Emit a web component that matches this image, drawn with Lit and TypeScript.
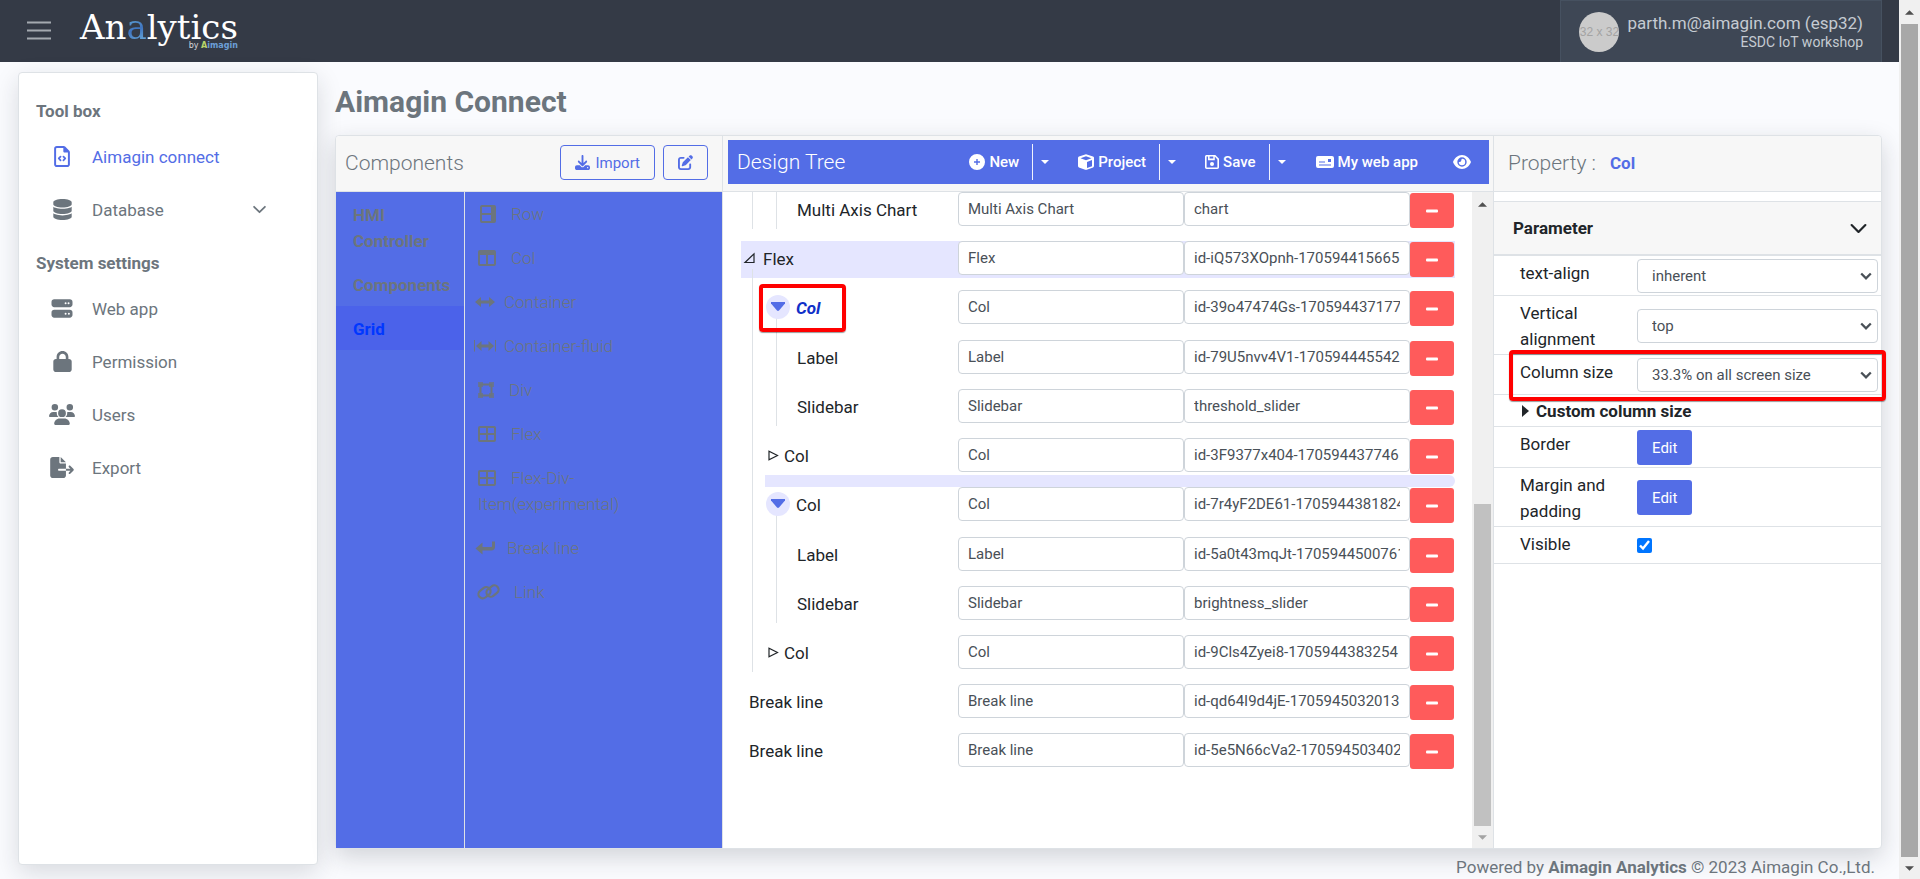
import { LitElement, html, css, svg, nothing, TemplateResult, SVGTemplateResult } from "lit";
import { customElement, property } from "lit/decorators.js";
import { classMap } from "lit/directives/class-map.js";

interface Icon {
  box: string;
  art: SVGTemplateResult;
}

const ICONS: Record<string, Icon> = {
  menu: {
    box: "0 0 24 20",
    art: svg`<path d="M0 1.5h24M0 9.5h24M0 17.5h24" fill="none" stroke="currentColor" stroke-width="2"/>`,
  },
  fileCode: {
    box: "0 0 384 512",
    art: svg`<path fill-rule="evenodd" d="M64 0h170c12 0 25 5 34 14l102 102c9 9 14 22 14 34v298c0 35-29 64-64 64H64c-35 0-64-29-64-64V64C0 29 29 0 64 0zm0 48c-9 0-16 7-16 16v384c0 9 7 16 16 16h256c9 0 16-7 16-16V160h-80c-18 0-32-14-32-32V48z"/><path d="M157 258l-44 46 44 46M227 258l44 46-44 46" fill="none" stroke="currentColor" stroke-width="42" stroke-linecap="round" stroke-linejoin="round"/>`,
  },
  database: {
    box: "0 0 448 512",
    art: svg`<path d="M448 80v48c0 44.2-100.3 80-224 80S0 172.2 0 128V80C0 35.8 100.3 0 224 0S448 35.8 448 80zM393.2 214.7c20.8-7.4 39.9-16.9 54.8-28.6V288c0 44.2-100.3 80-224 80S0 332.2 0 288V186.1c14.9 11.8 34 21.2 54.8 28.6C99.7 230.7 159.5 240 224 240s124.3-9.3 169.2-25.3zM0 346.1c14.9 11.8 34 21.2 54.8 28.6C99.7 390.7 159.5 400 224 400s124.3-9.3 169.2-25.3c20.8-7.4 39.9-16.9 54.8-28.6V432c0 44.2-100.3 80-224 80S0 476.2 0 432V346.1z"/>`,
  },
  server: {
    box: "0 0 512 512",
    art: svg`<path d="M64 32C28.7 32 0 60.7 0 96v64c0 35.3 28.7 64 64 64H448c35.3 0 64-28.7 64-64V96c0-35.3-28.7-64-64-64H64zm280 72a24 24 0 1 1 0 48 24 24 0 1 1 0-48zm48 24a24 24 0 1 1 48 0 24 24 0 1 1 -48 0zM64 288c-35.3 0-64 28.7-64 64v64c0 35.3 28.7 64 64 64H448c35.3 0 64-28.7 64-64V352c0-35.3-28.7-64-64-64H64zm280 72a24 24 0 1 1 0 48 24 24 0 1 1 0-48zm56 24a24 24 0 1 1 48 0 24 24 0 1 1 -48 0z"/>`,
  },
  lock: {
    box: "0 0 448 512",
    art: svg`<path d="M144 144v48H304V144c0-44.2-35.8-80-80-80s-80 35.8-80 80zM80 192V144C80 64.5 144.5 0 224 0s144 64.5 144 144v48h16c35.3 0 64 28.7 64 64V448c0 35.3-28.7 64-64 64H64c-35.3 0-64-28.7-64-64V256c0-35.3 28.7-64 64-64H80z"/>`,
  },
  users: {
    box: "0 0 640 512",
    art: svg`<path d="M144 0a80 80 0 1 1 0 160A80 80 0 1 1 144 0zM512 0a80 80 0 1 1 0 160A80 80 0 1 1 512 0zM0 298.7C0 239.8 47.8 192 106.7 192h42.7c15.9 0 31 3.5 44.6 9.7c-1.3 7.2-1.9 14.7-1.9 22.3c0 38.2 16.8 72.5 43.3 96c-.2 0-.4 0-.7 0H21.3C9.6 320 0 310.4 0 298.7zM405.3 320c-.2 0-.4 0-.7 0c26.6-23.5 43.3-57.8 43.3-96c0-7.6-.7-15-1.9-22.3c13.6-6.3 28.7-9.7 44.6-9.7h42.7C592.2 192 640 239.8 640 298.7c0 11.8-9.6 21.3-21.3 21.3H405.3zM224 224a96 96 0 1 1 192 0 96 96 0 1 1 -192 0zM128 485.3C128 411.7 187.7 352 261.3 352H378.7C452.3 352 512 411.7 512 485.3c0 14.7-11.9 26.7-26.7 26.7H154.7c-14.7 0-26.7-11.9-26.7-26.7z"/>`,
  },
  fileExport: {
    box: "0 0 576 512",
    art: svg`<path d="M0 64C0 28.7 28.7 0 64 0H224V128c0 17.7 14.3 32 32 32H384V288H216c-13.3 0-24 10.7-24 24s10.7 24 24 24H384V448c0 35.3-28.7 64-64 64H64c-35.3 0-64-28.7-64-64V64zM384 336V288H494.1l-39-39c-9.4-9.4-9.4-24.6 0-33.9s24.6-9.4 33.9 0l80 80c9.4 9.4 9.4 24.6 0 33.9l-80 80c-9.4 9.4-24.6 9.4-33.9 0s-9.4-24.6 0-33.9l39-39H384zm0-208H256V0L384 128z"/>`,
  },
  chevron: {
    box: "0 0 12 8",
    art: svg`<path d="M1 1.5l5 5 5-5" fill="none" stroke="currentColor" stroke-width="1.6" stroke-linecap="round" stroke-linejoin="round"/>`,
  },
  chevronBold: {
    box: "0 0 12 8",
    art: svg`<path d="M1.2 1.5L6 6.3l4.800-4.800" fill="none" stroke="currentColor" stroke-width="2.300"/>`,
  },
  download: {
    box: "0 0 512 512",
    art: svg`<path d="M288 32c0-17.7-14.3-32-32-32s-32 14.3-32 32V274.7l-73.4-73.4c-12.5-12.5-32.8-12.5-45.3 0s-12.5 32.8 0 45.3l128 128c12.5 12.5 32.8 12.5 45.3 0l128-128c12.5-12.5 12.5-32.8 0-45.3s-32.8-12.5-45.3 0L288 274.7V32zM64 352c-35.3 0-64 28.7-64 64v32c0 35.3 28.7 64 64 64H448c35.3 0 64-28.7 64-64V416c0-35.3-28.7-64-64-64H346.5l-45.3 45.3c-25 25-65.5 25-90.5 0L165.5 352H64zm368 56a24 24 0 1 1 0 48 24 24 0 1 1 0-48z"/>`,
  },
  edit: {
    box: "0 0 512 512",
    art: svg`<path d="M471.6 21.7c-21.9-21.9-57.3-21.9-79.2 0L362.3 51.7l97.9 97.9 30.1-30.1c21.9-21.9 21.9-57.3 0-79.2L471.6 21.7zm-299.2 220c-6.1 6.1-10.8 13.6-13.5 21.9l-29.6 88.8c-2.9 8.6-.6 18.1 5.8 24.6s15.9 8.7 24.6 5.8l88.8-29.6c8.2-2.7 15.7-7.4 21.9-13.5L437.7 172.3 339.7 74.3 172.4 241.7zM96 64C43 64 0 107 0 160V416c0 53 43 96 96 96H352c53 0 96-43 96-96V320c0-17.7-14.3-32-32-32s-32 14.3-32 32v96c0 17.7-14.3 32-32 32H96c-17.7 0-32-14.3-32-32V160c0-17.7 14.3-32 32-32h96c17.7 0 32-14.3 32-32s-14.3-32-32-32H96z"/>`,
  },
  row: {
    box: "0 0 18 18",
    art: svg`<path fill-rule="evenodd" d="M4 0h12a2 2 0 0 1 2 2v14a2 2 0 0 1-2 2H4a2 2 0 0 1-2-2V2a2 2 0 0 1 2-2zm0 2v6h9V2zm0 8v6h9v-6z"/>`,
  },
  col: {
    box: "0 0 18 18",
    art: svg`<path fill-rule="evenodd" d="M2 1h14a2 2 0 0 1 2 2v12a2 2 0 0 1-2 2H2a2 2 0 0 1-2-2V3a2 2 0 0 1 2-2zm0 5v9h6V6zm8 0v9h6V6z"/>`,
  },
  arrows: {
    box: "0 0 20 18",
    art: svg`<path d="M0 9l6-5v3.500h8V4l6 5-6 5v-3.500H6V14z"/>`,
  },
  arrowsBar: {
    box: "0 0 20 18",
    art: svg`<path d="M1 9l5.500-5v3.500h7V4l5.500 5-5.500 5v-3.500h-7V14z"/><path d="M-.5 3v11.500M20.500 3v11.500" stroke="currentColor" stroke-width="1"/>`,
  },
  frame: {
    box: "0 0 16 18",
    art: svg`<path d="M2.500 3.500h11v11h-11z" fill="none" stroke="currentColor" stroke-width="2"/><path d="M0 1h5v5H0zM11 1h5v5h-5zM0 12h5v5H0zM11 12h5v5h-5z" fill-opacity=".75"/>`,
  },
  table: {
    box: "0 0 18 18",
    art: svg`<path fill-rule="evenodd" d="M2 1h14a2 2 0 0 1 2 2v12a2 2 0 0 1-2 2H2a2 2 0 0 1-2-2V3a2 2 0 0 1 2-2zm0 2v5h6V3zm8 0v5h6V3zM2 10v5h6v-5zm8 0v5h6v-5z"/>`,
  },
  enter: {
    box: "0 0 14 18",
    art: svg`<path d="M-2.500 9.500l7-6v4.500h8.500c.7 0 1-.4 1-1V2.500h3V8c0 2-1.500 3.500-3.500 3.500H4.500V15.500z"/>`,
  },
  link: {
    box: "0 0 21 18",
    art: svg`<g fill="none" stroke="currentColor" stroke-width="2.200"><rect x="0" y="5.500" width="13" height="8.500" rx="4.200" transform="rotate(-38 6.500 9.700)"/><rect x="8" y="3.800" width="13" height="8.500" rx="4.200" transform="rotate(-38 14.500 8)"/></g>`,
  },
  plusCircle: {
    box: "0 0 16 16",
    art: svg`<path fill-rule="evenodd" d="M8 0a8 8 0 1 1 0 16A8 8 0 0 1 8 0zM7.300 5v2.300H5v1.400h2.300V11h1.400V8.700H11V7.300H8.700V5z"/>`,
  },
  cube: {
    box: "0 0 16 16",
    art: svg`<path fill-rule="evenodd" d="M7.200.4L1 2.500c-.6.2-1 .8-1 1.400v8c0 .6.300 1.200.9 1.500l6.300 2.400c.5.200 1.100.2 1.600 0l6.300-2.400c.6-.3.900-.9.900-1.500v-8c0-.6-.4-1.200-1-1.400L8.800.4a2.500 2.500 0 0 0-1.600 0zM8 2.200l5.500 2L8 6.200l-5.500-2zM9 8l5-1.900v6.100L9 14z"/>`,
  },
  save: {
    box: "0 0 14 14",
    art: svg`<path fill-rule="evenodd" d="M1.700 0h8.600l3.700 3.700v8.600c0 1-.7 1.700-1.700 1.700H1.700C.7 14 0 13.300 0 12.300V1.700C0 .7.700 0 1.700 0zm-.1 1.600v10.800h10.800V4.400L9.800 1.600v3.600H3V1.600zm3 0v2h3.700v-2z"/><circle cx="7" cy="9" r="2"/>`,
  },
  card: {
    box: "0 0 18 14",
    art: svg`<path fill-rule="evenodd" d="M2 1h14a2 2 0 0 1 2 2v8a2 2 0 0 1-2 2H2a2 2 0 0 1-2-2V3a2 2 0 0 1 2-2zm1 5.500v1h6v-1zm0 3v1h12v-1zM12 4v3h3V4z"/>`,
  },
  eye: {
    box: "0 0 18 14",
    art: svg`<path fill-rule="evenodd" d="M9 0c4.200 0 7.400 3 9 7-1.600 4-4.800 7-9 7S1.600 11 0 7c1.600-4 4.800-7 9-7zm0 2.300a4.700 4.700 0 1 0 0 9.400 4.700 4.700 0 0 0 0-9.400zm0 1.500a3.200 3.200 0 1 1-3.200 3.200c1.600.4 2.700-.7 2.500-2.200z"/>`,
  },
  caret: { box: "0 0 8 4", art: svg`<path d="M0 0h8L4 4z"/>` },
  minus: { box: "0 0 12 4", art: svg`<rect width="12" height="3" y="0.500" rx="1"/>` },
  triOpen: {
    box: "0 0 11 11",
    art: svg`<path d="M1 9.500h9V.8z" fill="none" stroke="currentColor" stroke-width="1.200"/>`,
  },
  triClosed: {
    box: "0 0 11 11",
    art: svg`<path d="M1 1.200v8.600l8.500-4.300z" fill="none" stroke="currentColor" stroke-width="1.200"/>`,
  },
  triDown: {
    box: "0 0 14 9",
    art: svg`<path d="M0 0h14v1.500L8 8.500q-1 .8-2 0L0 1.500z"/>`,
  },
  triSolid: { box: "0 0 7 12", art: svg`<path d="M0 0l7 6-7 6z"/>` },
  up: { box: "0 0 10 5", art: svg`<path d="M0 5h10L5 0z"/>` },
  down: { box: "0 0 10 5", art: svg`<path d="M0 0h10L5 5z"/>` },
};

const icon = (name: string, width: number, height: number) => svg`<svg
  class="icon" width=${width} height=${height} viewBox=${ICONS[name].box}
  fill="currentColor" aria-hidden="true">${ICONS[name].art}</svg>`;

const base = css`
  * {
    box-sizing: border-box;
  }
  .icon {
    flex: none;
    display: block;
    overflow: visible;
  }
  button,
  input,
  select {
    font: inherit;
    color: inherit;
    margin: 0;
  }
  ul {
    list-style: none;
    margin: 0;
    padding: 0;
  }
`;

@customElement("scroll-rail")
class ScrollRail extends LitElement {
  @property({ type: Number }) before = 0;
  @property({ type: Number }) size = 1;
  @property({ type: Number }) after = 0;

  static styles = [
    base,
    css`
      :host {
        display: flex;
        flex-direction: column;
        width: 21px;
        flex: none;
        background: #f0f0f0;
        color: #505050;
      }
      .end {
        display: flex;
        align-items: center;
        justify-content: center;
        height: 24px;
        flex: none;
      }
      .end.low {
        color: var(--rail-low, #505050);
        height: 22px;
      }
      .track {
        display: flex;
        flex-direction: column;
        flex: 1;
        padding: 0 2px;
      }
      .thumb {
        background: var(--rail-thumb, #a8a8a8);
      }
    `,
  ];

  render() {
    return html`
      <div class="end">${icon("up", 9, 5)}</div>
      <div class="track">
        <div style="flex:${this.before}"></div>
        <div class="thumb" style="flex:${this.size}"></div>
        <div style="flex:${this.after}"></div>
      </div>
      <div class="end low">${icon("down", 9, 5)}</div>
    `;
  }
}

@customElement("app-topbar")
class AppTopbar extends LitElement {
  static styles = [
    base,
    css`
      :host {
        display: flex;
        justify-content: space-between;
        height: 62px;
        flex: none;
        background: #343a46;
        padding-right: 17px;
      }
      .brand {
        display: flex;
        align-items: center;
        gap: 29px;
        padding-left: 27px;
      }
      .menu {
        border: 0;
        background: none;
        padding: 0;
        color: #a4a9b0;
      }
      .logo {
        display: flex;
        flex-direction: column;
        font: 34px/30px "DejaVu Serif", serif;
        color: #fff;
        text-decoration: none;
      }
      .accent {
        background: linear-gradient(160deg, #7fd0e8, #3f74c0 55%, #7fc4e4);
        -webkit-background-clip: text;
        background-clip: text;
        color: transparent;
      }
      .by {
        align-self: flex-end;
        font: 8px/8px "DejaVu Sans", sans-serif;
        color: #d5d8dc;
      }
      .by b {
        color: #6c9fd8;
      }
      .by .lead {
        color: #b9d56a;
      }
      .user {
        display: flex;
        align-items: center;
        gap: 8px;
        padding: 0 18px;
        background: #3e4755;
        border: 1px solid #465160;
        border-bottom: 0;
        color: #c5cbd2;
      }
      .avatar {
        display: flex;
        align-items: center;
        justify-content: center;
        width: 40px;
        height: 40px;
        border-radius: 50%;
        overflow: hidden;
        background: #cbcbcb;
        color: #a3a3a3;
        font: 12px/20px "Liberation Sans", sans-serif;
        white-space: nowrap;
      }
      .who {
        display: flex;
        flex-direction: column;
        text-align: right;
        font-size: 17px;
        line-height: 20px;
      }
      .org {
        font-size: 14px;
        line-height: 18px;
      }
    `,
  ];

  render() {
    return html`
      <div class="brand">
        <button class="menu" aria-label="Toggle menu">${icon("menu", 24, 20)}</button>
        <a class="logo" href="#">
          <span>An<span class="accent">a</span>lytics</span>
          <span class="by">by <b><span class="lead">A</span>imagin</b></span>
        </a>
      </div>
      <div class="user">
        <span class="avatar">32 x 32</span>
        <span class="who">
          <span>parth.m@aimagin.com (esp32)</span>
          <span class="org">ESDC IoT workshop</span>
        </span>
      </div>
    `;
  }
}

interface NavEntry {
  label: string;
  icon: string;
  width: number;
  active?: boolean;
  expandable?: boolean;
}

const NAV: { title: string; entries: NavEntry[] }[] = [
  {
    title: "Tool box",
    entries: [
      { label: "Aimagin connect", icon: "fileCode", width: 16, active: true },
      { label: "Database", icon: "database", width: 19, expandable: true },
    ],
  },
  {
    title: "System settings",
    entries: [
      { label: "Web app", icon: "server", width: 22 },
      { label: "Permission", icon: "lock", width: 19 },
      { label: "Users", icon: "users", width: 26 },
      { label: "Export", icon: "fileExport", width: 24 },
    ],
  },
];

@customElement("app-sidebar")
class AppSidebar extends LitElement {
  static styles = [
    base,
    css`
      :host {
        display: block;
        width: 300px;
        flex: none;
        margin: 10px 0 14px 18px;
        padding-top: 11px;
        background: #fff;
        border: 1px solid #dee2e6;
        border-radius: 4px;
        box-shadow: 0 8px 24px rgba(30, 34, 45, 0.15);
        color: #6c757d;
      }
      h2 {
        margin: 0;
        padding: 14px 17px 6px;
        font-size: 17px;
        line-height: 26px;
      }
      a {
        display: flex;
        align-items: center;
        height: 53px;
        padding-right: 51px;
        color: inherit;
        text-decoration: none;
      }
      a.active {
        color: #536de6;
      }
      .glyph {
        display: flex;
        justify-content: center;
        width: 30px;
        margin: 0 15px 0 28px;
      }
      .label {
        flex: 1;
      }
    `,
  ];

  render() {
    return NAV.map(
      (group) => html`
        <h2>${group.title}</h2>
        <ul>
          ${group.entries.map(
            (e) => html`<li>
              <a href="#" class=${classMap({ active: !!e.active })}>
                <span class="glyph">${icon(e.icon, e.width, 21)}</span>
                <span class="label">${e.label}</span>
                ${e.expandable ? icon("chevron", 13, 9) : nothing}
              </a>
            </li>`
          )}
        </ul>
      `
    );
  }
}

const GROUPS = ["HMI Controller", "Components", "Grid"];
const WIDGETS: { label: string; icon: string; width: number; near?: boolean }[] = [
  { label: "Row", icon: "row", width: 18 },
  { label: "Col", icon: "col", width: 18 },
  { label: "Container", icon: "arrows", width: 20, near: true },
  { label: "Container-fluid", icon: "arrowsBar", width: 20, near: true },
  { label: "Div", icon: "frame", width: 16 },
  { label: "Flex", icon: "table", width: 18 },
  { label: "Flex-Div-Item(experimental)", icon: "table", width: 18 },
  { label: "Break line", icon: "enter", width: 14 },
  { label: "Link", icon: "link", width: 21 },
];

@customElement("component-palette")
class ComponentPalette extends LitElement {
  static styles = [
    base,
    css`
      :host {
        display: flex;
        flex-direction: column;
        min-width: 0;
        border-right: 1px solid #dee2e6;
        color: #6c757d;
      }
      header {
        display: flex;
        align-items: center;
        gap: 8px;
        height: 56px;
        padding: 0 14px 2px 9px;
        background: #f7f7f7;
        border-bottom: 1px solid #dee2e6;
        border-radius: 4px 0 0 0;
      }
      h2 {
        flex: 1;
        margin: 0;
        font-size: 21px;
        font-weight: 300;
      }
      button {
        display: flex;
        align-items: center;
        gap: 5px;
        height: 35px;
        padding: 0 14px;
        border: 1px solid #536de6;
        border-radius: 4px;
        background: none;
        color: #536de6;
        font-size: 15px;
      }
      .body {
        display: flex;
        flex: 1;
        background: #536de6;
      }
      .groups {
        width: 129px;
        flex: none;
        border-right: 1px solid #dee2e6;
        font-weight: 700;
      }
      .groups a {
        display: block;
        padding: 10px 13px 8px 17px;
        color: inherit;
        text-decoration: none;
      }
      .groups a.active {
        background: #4b62ea;
        color: #0037ff;
      }
      .widgets {
        flex: 1;
        font-weight: 300;
      }
      .widgets li {
        padding: 9px 17px 9px 13px;
      }
      .widgets li.near {
        padding-left: 10px;
      }
      .icon {
        display: inline-block;
      }
      .widgets .icon {
        vertical-align: -3px;
        margin-right: 15px;
      }
      .widgets .near .icon {
        margin-right: 9px;
      }
    `,
  ];

  render() {
    return html`
      <header>
        <h2>Components</h2>
        <button>${icon("download", 15, 15)}Import</button>
        <button aria-label="Edit">${icon("edit", 15, 15)}</button>
      </header>
      <div class="body">
        <ul class="groups">
          ${GROUPS.map(
            (g) => html`<li><a href="#" class=${classMap({ active: g === "Grid" })}>${g}</a></li>`
          )}
        </ul>
        <ul class="widgets">
          ${WIDGETS.map(
            (w) => html`<li class=${classMap({ near: !!w.near })}>${icon(w.icon, w.width, 18)}${w.label}</li>`
          )}
        </ul>
      </div>
    `;
  }
}

interface TreeNode {
  name: string;
  id?: string;
  children?: TreeNode[];
  toggle?: "open" | "closed" | "hover";
  current?: boolean;
  marked?: boolean;
  dropAfter?: boolean;
}

const TREE: TreeNode[] = [
  { name: "", children: [{ name: "", children: [{ name: "Multi Axis Chart", id: "chart" }] }] },
  {
    name: "Flex",
    id: "id-iQ573XOpnh-170594415665",
    toggle: "open",
    marked: true,
    children: [
      {
        name: "Col",
        id: "id-39o47474Gs-170594437177",
        toggle: "hover",
        current: true,
        children: [
          { name: "Label", id: "id-79U5nvv4V1-170594445542" },
          { name: "Slidebar", id: "threshold_slider" },
        ],
      },
      { name: "Col", id: "id-3F9377x404-170594437746", toggle: "closed", dropAfter: true },
      {
        name: "Col",
        id: "id-7r4yF2DE61-1705944381824",
        toggle: "hover",
        children: [
          { name: "Label", id: "id-5a0t43mqJt-1705944500761" },
          { name: "Slidebar", id: "brightness_slider" },
        ],
      },
      { name: "Col", id: "id-9Cls4Zyei8-1705944383254", toggle: "closed" },
    ],
  },
  { name: "Break line", id: "id-qd64I9d4jE-1705945032013" },
  { name: "Break line", id: "id-5e5N66cVa2-170594503402" },
];

@customElement("design-tree")
class DesignTree extends LitElement {
  static styles = [
    base,
    css`
      :host {
        display: flex;
        flex-direction: column;
        min-width: 0;
        min-height: 0;
        border-right: 1px solid #dee2e6;
        color: #212529;
      }
      header {
        height: 56px;
        flex: none;
        padding: 4px 4px 7px 5px;
        background: #f7f7f7;
        border-bottom: 1px solid #dee2e6;
      }
      .bar {
        display: flex;
        align-items: center;
        height: 44px;
        padding: 0 5px 0 9px;
        gap: 8px;
        background: #536de6;
        color: #fff;
      }
      h2 {
        flex: 1;
        margin: 0;
        font-size: 21px;
        font-weight: 350;
      }
      .split {
        display: flex;
      }
      .bar button {
        display: flex;
        align-items: center;
        gap: 4px;
        height: 36px;
        padding: 0 13px;
        border: 0;
        background: none;
        font-size: 15px;
        font-weight: 500;
      }
      .bar .plain {
        padding: 0 14px;
      }
      .bar .split .more {
        padding: 0 8px;
        border-left: 1px solid #f0f2fd;
      }
      .scroller {
        display: flex;
        flex: 1;
        min-height: 0;
        --rail-thumb: #c1c1c1;
        --rail-low: #a3a3a3;
      }
      .view {
        flex: 1;
        min-width: 0;
        overflow: hidden;
        padding: 0 17px 0 18px;
      }
      .view > ul {
        margin-top: -1px;
      }
      ul ul {
        position: relative;
        margin-left: 11px;
        padding-left: 13px;
      }
      ul ul ul {
        padding-top: 1px;
      }
      ul ul::before {
        content: "";
        position: absolute;
        left: 0;
        top: -21px;
        bottom: 12px;
        border-left: 1px solid #dee2e6;
      }
      .row {
        position: relative;
        display: flex;
        height: 37px;
      }
      .row.marked {
        background: #e5e6ff;
      }
      .gap {
        height: 12px;
      }
      .gap.drop {
        background: #e5e6ff;
        border-radius: 0 6px 6px 0;
      }
      .name {
        display: flex;
        flex: 1;
        align-items: center;
        padding: 0 0 2px 8px;
      }
      .name.open {
        padding-left: 3px;
        gap: 8px;
      }
      .name.closed {
        padding-left: 3px;
        gap: 5px;
      }
      .name.hover {
        padding-left: 1px;
        gap: 6px;
      }
      .name.current {
        color: #1030c8;
        font-weight: 700;
        font-style: italic;
      }
      .toggle {
        position: relative;
        z-index: 1;
        padding: 0;
        border: 0;
        background: none;
      }
      .hover .toggle {
        display: flex;
        align-items: center;
        justify-content: center;
        width: 24px;
        height: 24px;
        border-radius: 50%;
        background: #e5e6ff;
        color: #536de6;
        margin-bottom: 2px;
      }
      input {
        width: 226px;
        height: 34px;
        padding: 0 9px;
        border: 1px solid #ced4da;
        border-radius: 4px;
        background: #fff;
        color: #495057;
        font-size: 15px;
      }
      .remove {
        display: flex;
        align-items: center;
        justify-content: center;
        width: 44px;
        height: 35px;
        margin: 1px 1px 0 0;
        padding: 0;
        border: 0;
        border-radius: 3px;
        background: #ff5b5b;
        color: #fff;
      }
      .callout {
        position: absolute;
        left: -6px;
        top: -6px;
        bottom: -5px;
        width: 87px;
        border: 4px solid #f00;
        border-radius: 4px;
        box-shadow: 0 1px 1px rgba(0, 0, 0, 0.4);
        z-index: 2;
      }
    `,
  ];

  private node(n: TreeNode): TemplateResult {
    const glyph = n.toggle === "open" ? icon("triOpen", 11, 11)
      : n.toggle === "closed" ? icon("triClosed", 11, 11)
      : icon("triDown", 14, 9);
    return html`<li>
      ${n.id
        ? html`<div class=${classMap({ row: true, marked: !!n.marked })}>
              <div class=${`name ${n.toggle ?? ""} ${n.current ? "current" : ""}`}>
                ${n.toggle ? html`<button class="toggle" aria-label="Toggle ${n.name}">${glyph}</button>` : nothing}
                <span>${n.name}</span>
              </div>
              <input type="text" aria-label="Name" .value=${n.name} />
              <input type="text" aria-label="Identifier" .value=${n.id} />
              <button class="remove" aria-label="Remove ${n.name}">${icon("minus", 12, 4)}</button>
              ${n.current ? html`<div class="callout"></div>` : nothing}
            </div>
            <div class=${classMap({ gap: true, drop: !!n.dropAfter })}></div>`
        : nothing}
      ${n.children ? html`<ul>${n.children.map((c) => this.node(c))}</ul>` : nothing}
    </li>`;
  }

  private split(label: string, name: string, size: number) {
    return html`<div class="split">
      <button>${icon(name, size, size)}${label}</button>
      <button class="more" aria-label="More ${label} options">${icon("caret", 8, 4)}</button>
    </div>`;
  }

  render() {
    return html`
      <header>
        <div class="bar">
          <h2>Design Tree</h2>
          ${this.split("New", "plusCircle", 16)} ${this.split("Project", "cube", 16)}
          ${this.split("Save", "save", 14)}
          <button class="plain">${icon("card", 18, 14)}My web app</button>
          <button aria-label="Preview">${icon("eye", 18, 14)}</button>
        </div>
      </header>
      <div class="scroller">
        <div class="view"><ul>${TREE.map((n) => this.node(n))}</ul></div>
        <scroll-rail .before=${288} .size=${322} .after=${0}></scroll-rail>
      </div>
    `;
  }
}

@customElement("property-panel")
class PropertyPanel extends LitElement {
  static styles = [
    base,
    css`
      :host {
        display: block;
        min-width: 0;
        color: #212529;
      }
      header {
        display: flex;
        align-items: center;
        gap: 14px;
        height: 56px;
        padding: 0 14px 2px;
        background: #f7f7f7;
        border-bottom: 1px solid #dee2e6;
        border-radius: 0 4px 0 0;
      }
      h2 {
        margin: 0;
        font-size: 21px;
        font-weight: 300;
        color: #6c757d;
      }
      .target {
        color: #536de6;
        font-weight: 700;
      }
      .section {
        display: flex;
        align-items: center;
        justify-content: space-between;
        width: 100%;
        height: 55px;
        margin-top: 9px;
        padding: 0 14px 0 19px;
        background: #f7f7f7;
        border: solid #dee2e6;
        border-width: 1px 0 2px;
        font-weight: 700;
      }
      .row {
        position: relative;
        display: flex;
        align-items: center;
        border-bottom: 1px solid #dee2e6;
        padding: 0 3px 0 26px;
      }
      .label {
        align-self: flex-start;
        width: 117px;
        flex: none;
        padding: 4px 20px 2px 0;
      }
      .field {
        position: relative;
        flex: 1;
        display: flex;
        align-items: center;
        margin: 3px 0 2px;
      }
      .field .icon {
        position: absolute;
        right: 6px;
        pointer-events: none;
        color: #495057;
      }
      select {
        appearance: none;
        width: 100%;
        height: 34px;
        padding: 0 26px 0 14px;
        border: 1px solid #ced4da;
        border-radius: 4px;
        background: #fff;
        color: #495057;
        font-size: 15px;
      }
      .edit {
        height: 35px;
        padding: 0 15px;
        border: 0;
        border-radius: 3px;
        background: #536de6;
        color: #fff;
        font-size: 15px;
      }
      .check {
        width: 15px;
        height: 15px;
        margin: 8px 0;
        accent-color: #0075ff;
      }
      .custom {
        display: flex;
        align-items: center;
        gap: 7px;
        width: 100%;
        height: 32px;
        padding: 1px 28px 0;
        border: 0;
        border-bottom: 1px solid #dee2e6;
        background: none;
        font-weight: 700;
      }
      .callout {
        position: absolute;
        inset: -5px -5px -7px 15px;
        border: 4px solid #f00;
        border-radius: 4px;
        box-shadow: 0 1px 1px rgba(0, 0, 0, 0.4), inset 0 1px 1px rgba(0, 0, 0, 0.4);
        pointer-events: none;
        z-index: 1;
      }
    `,
  ];

  private choice(id: string, label: string, value: string, callout = false) {
    return html`<div class="row">
      <label class="label" for=${id}>${label}</label>
      <div class="field">
        <select id=${id}><option>${value}</option></select>
        ${icon("chevronBold", 12, 8)}
      </div>
      ${callout ? html`<div class="callout"></div>` : nothing}
    </div>`;
  }

  private action(id: string, label: string) {
    return html`<div class="row">
      <label class="label" for=${id}>${label}</label>
      <div class="field"><button class="edit" id=${id}>Edit</button></div>
    </div>`;
  }

  render() {
    return html`
      <header><h2>Property :</h2><span class="target">Col</span></header>
      <button class="section">Parameter${icon("chevron", 17, 11)}</button>
      ${this.choice("text-align", "text-align", "inherent")}
      ${this.choice("vertical", "Vertical alignment", "top")}
      ${this.choice("column-size", "Column size", "33.3% on all screen size", true)}
      <button class="custom">${icon("triSolid", 7, 12)}Custom column size</button>
      ${this.action("border", "Border")} ${this.action("spacing", "Margin and padding")}
      <div class="row">
        <label class="label" for="visible">Visible</label>
        <div class="field"><input class="check" id="visible" type="checkbox" checked /></div>
      </div>
    `;
  }
}

@customElement("app-root")
class AppRoot extends LitElement {
  static styles = [
    base,
    css`
      :host {
        display: flex;
        height: 100vh;
        background: #fafbfe;
        font: 400 17px/26px Roboto, "Noto Sans", sans-serif;
        color: #6c757d;
        overflow: hidden;
      }
      .page {
        display: flex;
        flex-direction: column;
        flex: 1;
        min-width: 0;
      }
      .content {
        display: flex;
        flex: 1;
        min-height: 0;
      }
      main {
        display: flex;
        flex-direction: column;
        flex: 1;
        min-width: 0;
        padding: 0 17px;
      }
      h1 {
        margin: 0;
        padding: 20px 0 13px;
        font-size: 30px;
        line-height: 40px;
      }
      .card {
        display: grid;
        grid-template-columns: 387fr 771fr 387fr;
        grid-template-rows: minmax(0, 1fr);
        flex: 1;
        min-height: 0;
        background: #fff;
        border: 1px solid #dee2e6;
        border-radius: 4px;
        box-shadow: 0 8px 24px rgba(30, 34, 45, 0.18);
      }
      footer {
        height: 30px;
        padding: 5px 7px 0;
        text-align: right;
      }
    `,
  ];

  render() {
    return html`
      <div class="page">
        <app-topbar></app-topbar>
        <div class="content">
          <app-sidebar></app-sidebar>
          <main>
            <h1>Aimagin Connect</h1>
            <div class="card">
              <component-palette></component-palette>
              <design-tree></design-tree>
              <property-panel></property-panel>
            </div>
            <footer>Powered by <b>Aimagin Analytics</b> © 2023 Aimagin Co.,Ltd.</footer>
          </main>
        </div>
      </div>
      <scroll-rail></scroll-rail>
    `;
  }
}
